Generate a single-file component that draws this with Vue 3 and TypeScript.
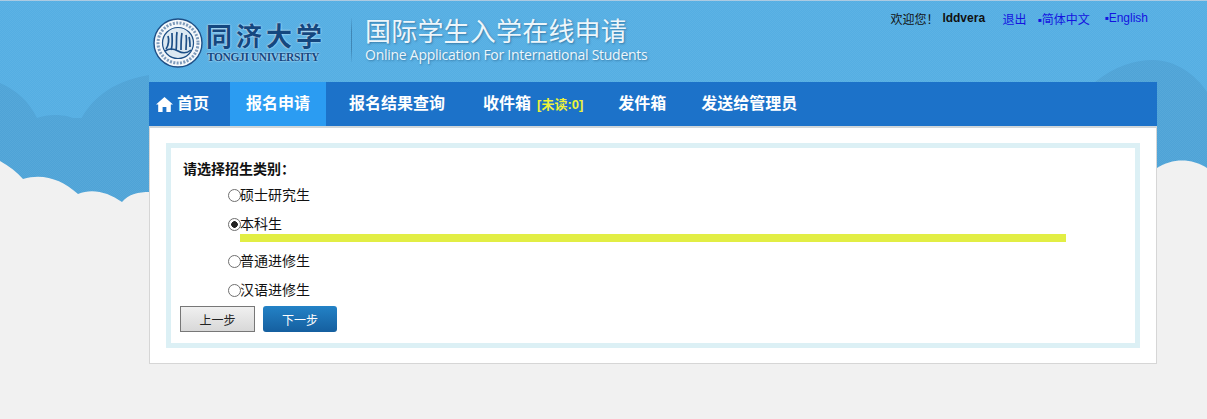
<template>
  <div class="page">
    <!-- sky and clouds behind everything -->
    <svg class="sky" width="1207" height="419" viewBox="0 0 1207 419" aria-hidden="true">
      <defs>
        <pattern id="dither" width="2" height="2" patternUnits="userSpaceOnUse">
          <rect width="1" height="1" fill="#fff" fill-opacity="0.05" />
          <rect x="1" y="1" width="1" height="1" fill="#fff" fill-opacity="0.05" />
        </pattern>
      </defs>
      <rect width="1207" height="419" fill="#54aee3" />
      <rect width="1207" height="1" fill="#a9c9e2" />
      <path
        d="M0 83 C16 90 28 100 37 118 C50 113 68 114 80 121 C90 102 108 82 149 75 L149 230 L0 230 Z"
        fill="#4ea3d7"
      />
      <path d="M1095 82 C1115 66 1135 60 1153 60 C1175 60 1195 74 1207 92 L1207 230 L1095 230 Z" fill="#4ea3d7" />
      <path d="M0 118 H1207 V230 H0 Z" fill="#4ea3d7" />
      <rect width="1207" height="230" fill="url(#dither)" />
      <path
        d="M0 161 C9 166 17 172 23 179 C44 173 62 180 78 194 C92 188 108 192 122 202 C129 194 138 192 150 192 L150 419 L0 419 Z"
        fill="#f1f1f1"
      />
      <path d="M1157 168 C1172 158 1192 158 1207 168 L1207 419 L1157 419 Z" fill="#f1f1f1" />
      <rect y="230" width="1207" height="189" fill="#f1f1f1" />
    </svg>

    <div class="wrap">
      <header class="top">
        <div class="brand">
          <svg class="seal" width="50" height="50" viewBox="0 0 50 50" aria-hidden="true">
            <circle cx="25" cy="25" r="24" fill="#f4f8fb" stroke="#1d4f86" stroke-width="1.4" />
            <circle cx="25" cy="25" r="20" fill="none" stroke="#1d4f86" stroke-width="3" stroke-dasharray="2 1.4" opacity="0.55" />
            <circle cx="25" cy="25" r="15.5" fill="#dce9f2" stroke="#1d4f86" stroke-width="1.2" />
            <path
              d="M13 31 C16 27 16 21 15 18 M18 32 C20 27 19 20 19 15 M23 32 C24 27 23 20 24 14 M28 32 C28 26 28 20 29 15 M33 32 C33 27 34 21 33 17 M37 29 C37 25 37 22 36 19"
              fill="none"
              stroke="#1d4f86"
              stroke-width="1.7"
            />
            <path d="M12 33 Q18 29 25 33 T38 32" fill="none" stroke="#1d4f86" stroke-width="1.6" />
          </svg>
          <div class="brand-text">
            <div class="brand-cn">同济大学</div>
            <div class="brand-en">TONGJI UNIVERSITY</div>
          </div>
        </div>
        <div class="divider"></div>
        <div class="title">
          <div class="title-cn">国际学生入学在线申请</div>
          <div class="title-en">Online Application For International Students</div>
        </div>
        <div class="user">
          <span class="welcome">欢迎您！</span>
          <b class="name">lddvera</b>
          <a class="logout">退出</a>
          <a class="lang-cn">▪简体中文</a>
          <a class="lang-en">▪English</a>
        </div>
      </header>

      <nav class="nav">
        <a class="nav-home">
          <svg width="17" height="15" viewBox="0 0 17 15" aria-hidden="true">
            <path d="M8.5 0 L17 7.6 L14.8 7.6 L14.8 15 L10.4 15 L10.4 10 L6.6 10 L6.6 15 L2.2 15 L2.2 7.6 L0 7.6 Z" fill="#fff" />
          </svg>
          首页
        </a>
        <a
          v-for="item in navItems"
          :key="item.label"
          class="nav-item"
          :class="{ active: item.active, wide: item.wide }"
        >
          {{ item.label }}<em v-if="item.badge" class="badge">{{ item.badge }}</em>
        </a>
      </nav>

      <main class="card">
        <section class="frame">
          <h2 class="heading">请选择招生类别：</h2>
          <div class="options">
            <div v-for="opt in options" :key="opt.value" class="option" :class="{ open: opt.value === selected }">
              <label class="choice">
                <input v-model="selected" type="radio" name="kind" :value="opt.value" />
                <span>{{ opt.label }}</span>
              </label>
              <div v-if="opt.value === selected" class="marker"></div>
            </div>
          </div>
          <div class="actions">
            <button class="btn prev" type="button">上一步</button>
            <button class="btn next" type="button">下一步</button>
          </div>
        </section>
      </main>
    </div>
  </div>
</template>

<script setup lang="ts">
import { ref } from 'vue'

const navItems = [
  { label: '报名申请', active: true },
  { label: '报名结果查询', wide: true },
  { label: '收件箱', badge: '[未读:0]', wide: true },
  { label: '发件箱' },
  { label: '发送给管理员' },
]

const options = [
  { value: 'master', label: '硕士研究生' },
  { value: 'bachelor', label: '本科生' },
  { value: 'general', label: '普通进修生' },
  { value: 'chinese', label: '汉语进修生' },
]

const selected = ref('bachelor')
</script>

<style>
html,
body {
  margin: 0;
  background: #f1f1f1;
}
</style>

<style scoped>
.page {
  position: relative;
  height: 419px;
  overflow: hidden;
  font-family: 'Liberation Sans', 'Noto Sans CJK SC', sans-serif;
  color: #111;
}
.sky {
  position: absolute;
  left: 0;
  top: 0;
}
.wrap {
  position: relative;
  width: 1008px;
  margin-left: 149px;
}

/* header */
.top {
  display: flex;
  height: 82px;
}
.brand {
  display: flex;
  margin: 18px 0 0 4px;
  width: 198px;
  height: 50px;
}
.brand-text {
  margin-left: 3px;
  width: 118px;
}
.brand-cn {
  margin-top: 2px;
  font-size: 26px;
  line-height: 34px;
  font-weight: 700;
  letter-spacing: 4px;
  white-space: nowrap;
  color: #14477f;
  text-shadow: 0 0 2px #fff;
}
.brand-en {
  font-family: 'Liberation Serif', serif;
  font-size: 11.5px;
  line-height: 14px;
  margin: -4px 0 0 1px;
  font-weight: 700;
  letter-spacing: -0.4px;
  white-space: nowrap;
  color: #14477f;
  text-shadow: 0 0 2px #fff;
}
.divider {
  width: 1px;
  height: 44px;
  margin-top: 18px;
  background: linear-gradient(rgba(50, 110, 155, 0.1), #3f86b5 30%, #3f86b5 70%, rgba(50, 110, 155, 0.1));
}
.title {
  margin: 13px 0 0 13px;
  color: #edf6fb;
  text-shadow: 1px 1px 2px rgba(30, 80, 120, 0.55);
}
.title-cn {
  font-family: 'Noto Sans CJK SC', sans-serif;
  font-size: 26px;
  line-height: 34px;
  letter-spacing: 0.2px;
  white-space: nowrap;
}
.title-en {
  font-family: 'Open Sans', sans-serif;
  font-size: 14px;
  line-height: 16px;
  letter-spacing: -0.26px;
  white-space: nowrap;
}
.user {
  display: flex;
  align-items: center;
  height: 16px;
  margin: 10px 9px 0 auto;
  font-size: 12px;
  white-space: nowrap;
}
.welcome {
  width: 52px;
}
.name {
  width: 60px;
}
.user a {
  color: #1414e0;
}
.logout {
  width: 35px;
}
.lang-cn {
  width: 67px;
}

/* nav */
.nav {
  display: flex;
  height: 44px;
  gap: 3px;
  background: #1c72c9;
  color: #fff;
  font-size: 16px;
  font-weight: 700;
  line-height: 44px;
  white-space: nowrap;
}
.nav-home {
  display: flex;
  align-items: center;
  gap: 4px;
  box-sizing: border-box;
  width: 81px;
  padding-left: 7px;
  margin-right: -3px;
}
.nav-item {
  padding: 0 16px;
}
.nav-item.wide {
  margin-left: 4px;
}
.nav-item.wide + .nav-item.wide {
  margin-left: 3px;
}
.nav-item.active {
  background: #2b9cf2;
}
.badge {
  margin-left: 6px;
  font-size: 13px;
  font-style: normal;
  color: #eef23a;
}

/* content */
.card {
  box-sizing: border-box;
  height: 238px;
  padding: 15px 16px 15px;
  background: #fff;
  border: 1px solid #d6d6d6;
  border-top: 2px solid #cfd6da;
}
.frame {
  box-sizing: border-box;
  height: 205px;
  padding: 13px 0 0 12px;
  border: 5px solid #dcf0f5;
}
.heading {
  margin: 0;
  font-size: 14px;
  line-height: 16px;
  font-weight: 700;
}
.options {
  margin: 2px 0 0 45px;
}
.option {
  height: 29px;
}
.option.open {
  height: 37px;
}
.choice {
  display: flex;
  align-items: center;
  height: 29px;
  font-size: 14px;
}
.choice input {
  appearance: none;
  box-sizing: border-box;
  flex: none;
  width: 13px;
  height: 13px;
  margin: 3px 0 0;
  border: 1px solid #6f6f6f;
  border-radius: 50%;
  background: #fff;
}
.choice input:checked {
  background: radial-gradient(circle, #222 0 3px, #fff 3.6px);
}
.choice span {
  margin-left: -1px;
}
.marker {
  width: 826px;
  height: 8px;
  margin: -3px 0 0 12px;
  background: #e2ee44;
}
.actions {
  display: flex;
  gap: 8px;
  margin: 3px 0 0 -3px;
}
.btn {
  box-sizing: border-box;
  height: 26px;
  padding: 0;
  font-family: inherit;
  font-size: 12px;
}
.prev {
  width: 75px;
  border: 1px solid #777;
  color: #222;
  background: linear-gradient(#f0f0f0, #d8d8d8);
}
.next {
  width: 74px;
  border: 0;
  border-radius: 3px;
  color: #fff;
  background: linear-gradient(#2382c6, #155f9f);
}
</style>
